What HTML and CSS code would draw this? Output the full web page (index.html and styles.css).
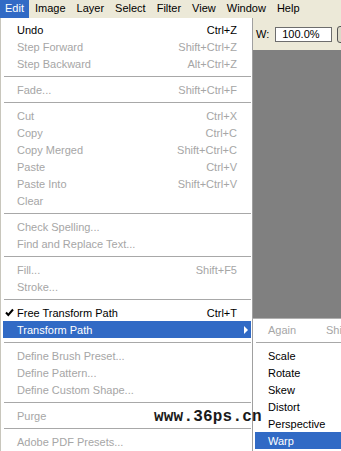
FILE: index.html
```html
<!DOCTYPE html>
<html lang="en">
<head>
  <meta charset="UTF-8">
  <title>Edit menu</title>
  <link rel="stylesheet" href="styles.css">
</head>
<body>

<!-- MENU BAR -->
<nav class="menubar">
  <span class="top active">Edit</span>
  <span class="top">Image</span>
  <span class="top">Layer</span>
  <span class="top">Select</span>
  <span class="top">Filter</span>
  <span class="top">View</span>
  <span class="top">Window</span>
  <span class="top">Help</span>
</nav>

<div class="workspace">

  <!-- EDIT DROPDOWN -->
  <div class="menu">
    <div class="item"><span class="mark"></span><span class="label">Undo</span><span class="key">Ctrl+Z</span></div>
    <div class="item off"><span class="mark"></span><span class="label">Step Forward</span><span class="key">Shift+Ctrl+Z</span></div>
    <div class="item off"><span class="mark"></span><span class="label">Step Backward</span><span class="key">Alt+Ctrl+Z</span></div>
    <div class="sep"></div>
    <div class="item off"><span class="mark"></span><span class="label">Fade...</span><span class="key">Shift+Ctrl+F</span></div>
    <div class="sep"></div>
    <div class="item off"><span class="mark"></span><span class="label">Cut</span><span class="key">Ctrl+X</span></div>
    <div class="item off"><span class="mark"></span><span class="label">Copy</span><span class="key">Ctrl+C</span></div>
    <div class="item off"><span class="mark"></span><span class="label">Copy Merged</span><span class="key">Shift+Ctrl+C</span></div>
    <div class="item off"><span class="mark"></span><span class="label">Paste</span><span class="key">Ctrl+V</span></div>
    <div class="item off"><span class="mark"></span><span class="label">Paste Into</span><span class="key">Shift+Ctrl+V</span></div>
    <div class="item off"><span class="mark"></span><span class="label">Clear</span></div>
    <div class="sep"></div>
    <div class="item off"><span class="mark"></span><span class="label">Check Spelling...</span></div>
    <div class="item off"><span class="mark"></span><span class="label">Find and Replace Text...</span></div>
    <div class="sep"></div>
    <div class="item off"><span class="mark"></span><span class="label">Fill...</span><span class="key">Shift+F5</span></div>
    <div class="item off"><span class="mark"></span><span class="label">Stroke...</span></div>
    <div class="sep"></div>
    <div class="item">
      <span class="mark"><svg width="9" height="9" viewBox="0 0 9 9"><path d="M1 4.5 L3.3 7 L8 1.5" fill="none" stroke="#000" stroke-width="2"/></svg></span>
      <span class="label">Free Transform Path</span><span class="key">Ctrl+T</span>
    </div>
    <div class="item hot"><span class="mark"></span><span class="label">Transform Path</span><span class="arrow"></span></div>
    <div class="sep"></div>
    <div class="item off"><span class="mark"></span><span class="label">Define Brush Preset...</span></div>
    <div class="item off"><span class="mark"></span><span class="label">Define Pattern...</span></div>
    <div class="item off"><span class="mark"></span><span class="label">Define Custom Shape...</span></div>
    <div class="sep"></div>
    <div class="item off"><span class="mark"></span><span class="label">Purge</span></div>
    <div class="sep"></div>
    <div class="item off"><span class="mark"></span><span class="label">Adobe PDF Presets...</span></div>
  </div>

  <!-- RIGHT SIDE: OPTIONS BAR, CANVAS, SUBMENU -->
  <div class="side">
    <div class="options">
      <span>W:</span>
      <span class="field">100.0%</span>
      <span class="tool"></span>
    </div>
    <div class="canvas"></div>
    <div class="submenu">
      <div class="sitem off"><span class="slabel">Again</span><span>Shift+Ctrl+T</span></div>
      <div class="sep"></div>
      <div class="sitem"><span class="slabel">Scale</span></div>
      <div class="sitem"><span class="slabel">Rotate</span></div>
      <div class="sitem"><span class="slabel">Skew</span></div>
      <div class="sitem"><span class="slabel">Distort</span></div>
      <div class="sitem"><span class="slabel">Perspective</span></div>
      <div class="sitem hot"><span class="slabel">Warp</span></div>
    </div>
  </div>
</div>

<!-- WATERMARK -->
<div class="watermark">www.36ps.cn</div>

</body>
</html>
```

FILE: styles.css
```css
/* --- Global --- */
body { margin: 0; height: 451px; overflow: hidden; position: relative; font-family: "Liberation Sans", Arial, sans-serif; font-size: 11px; color: #000; background: #808080; }

/* --- Menu bar --- */
.menubar { display: flex; gap: 1px; height: 18px; line-height: 17px; background: #ece9d8; }
.top { padding: 0 5px; white-space: nowrap; }
.top.active { background: #316ac5; color: #fff; }

.workspace { display: flex; height: 433px; }

/* --- Dropdown --- */
.menu {
  width: 253px; flex: none; box-sizing: border-box;
  background: #fff; border-left: 1px solid #c8c6bc; border-right: 1px solid #a0a0a0;
  padding: 3px 1px 0 2px;
}
.item { display: flex; align-items: center; height: 17px; line-height: 18px; padding-right: 3px; white-space: nowrap; }
.mark { width: 14px; flex: none; display: flex; align-items: center; padding-left: 2px; box-sizing: border-box; }
.label { flex: 1; }
.key { margin-right: 11px; }
.off { color: #a6a6a6; }
.hot { background: #316ac5; color: #fff; }
.arrow { width: 0; height: 0; border-left: 4px solid #fff; border-top: 4px solid transparent; border-bottom: 4px solid transparent; }

.sep { height: 9px; position: relative; }
.sep::after { content: ""; position: absolute; left: 1px; right: 0; top: 4px; border-top: 1px solid #a8a8a8; }

/* --- Right column --- */
.side { flex: 1; display: flex; flex-direction: column; min-width: 0; }
.options { height: 32px; flex: none; display: flex; align-items: center; padding-left: 3px; background: #ece9d8; white-space: nowrap; }
.field { width: 49px; height: 13px; line-height: 13px; margin-left: 6px; padding-left: 6px; border: 1px solid #6d6d6d; background: #fff; flex: none; }
.tool { width: 10px; height: 15px; margin-left: 5px; border: 1px solid #555; border-radius: 3px; flex: none; background: #dcd9c8; }
.canvas { flex: 1; background: #808080; }

/* --- Submenu --- */
.submenu {
  flex: none; margin-left: -1px; background: #fff; overflow: hidden;
  border-left: 1px solid #a0a0a0; border-top: 1px solid #b0b0b0;
  padding: 2px 0 2px 2px;
}
.sitem { display: flex; height: 17px; line-height: 18px; padding-left: 13px; white-space: nowrap; }
.slabel { width: 58px; flex: none; }

/* --- Watermark --- */
.watermark {
  position: absolute; left: 154px; top: 408px;
  font-family: "Liberation Mono", "Courier New", monospace; font-weight: bold; font-size: 16px;
  color: #1a1a1a; letter-spacing: 0.2px;
}
```
